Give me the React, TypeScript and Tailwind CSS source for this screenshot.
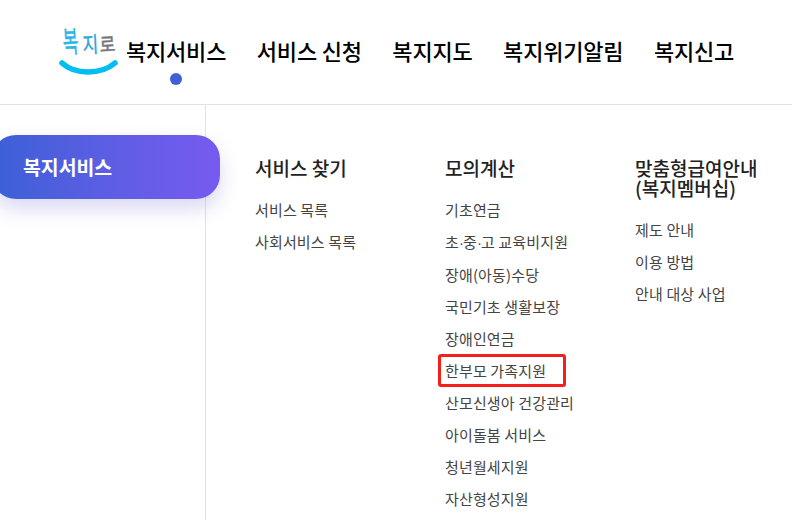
const nav = ["복지서비스", "서비스 신청", "복지지도", "복지위기알림", "복지신고"];
const cols = [
  { title: ["서비스 찾기"], items: ["서비스 목록", "사회서비스 목록"] },
  { title: ["모의계산"], items: ["기초연금", "초·중·고 교육비지원", "장애(아동)수당", "국민기초 생활보장", "장애인연금", "한부모 가족지원", "산모신생아 건강관리", "아이돌봄 서비스", "청년월세지원", "자산형성지원"] },
  { title: ["맞춤형급여안내", "(복지멤버십)"], items: ["제도 안내", "이용 방법", "안내 대상 사업"] },
];

function Item({ text }: { text: string }) {
  const parts = text.split("·");
  return (
    <>
      {parts.map((p, i) => (
        <span key={i}>
          {i > 0 && <span className="font-['Liberation_Sans',sans-serif] tracking-[-1px]">·</span>}
          {p}
        </span>
      ))}
    </>
  );
}

function Logo() {
  return (
    <svg width="60" height="54" viewBox="0 0 60 54" className="block overflow-visible">
      <text transform="translate(4.5 27) rotate(-4) scale(1 1.75)" fontSize="17" fill="#2bb4e8" stroke="#2bb4e8" strokeWidth="0.3" fontFamily="'Noto Sans CJK KR'">복</text>
      <text transform="translate(24 27) rotate(-3) scale(1 1.3)" fontSize="17" fill="#2ba5dc" stroke="#2ba5dc" strokeWidth="0.3" fontFamily="'Noto Sans CJK KR'">지</text>
      <text transform="translate(41 26) rotate(-3) scale(1 1.15)" fontSize="17" fill="#77787b" stroke="#77787b" strokeWidth="0.5" fontFamily="'Noto Sans CJK KR'">로</text>
      <path d="M3 37 C 16 49, 42 49, 56 37" fill="none" stroke="#00bdf2" strokeWidth="5.5" strokeLinecap="round" />
    </svg>
  );
}

export default function App() {
  return (
    <div className="w-[792px] h-[520px] overflow-hidden bg-white text-[#222] font-['Noto_Sans_CJK_KR',sans-serif]">
      <header className="h-[105px] border-b border-[#e2e2e2] flex items-start pl-[59px]">
        <div className="pt-[26px] w-[60px] shrink-0"><Logo /></div>
        <nav className="flex gap-[30.6px] pl-[7px] pt-[35px]">
          {nav.map((n, i) => (
            <div key={n} className="relative text-[22px] leading-[30px] font-medium text-black whitespace-nowrap tracking-[-0.2px]">
              {n}
              {i === 0 && <span className="absolute left-1/2 -translate-x-1/2 top-[38px] w-[12px] h-[12px] rounded-full bg-[#4060d8]" />}
            </div>
          ))}
        </nav>
      </header>
      <main className="flex h-[415px]">
        <aside className="w-[206px] shrink-0 border-r border-[#e2e2e2] relative">
          <div className="absolute left-[-8px] top-[30px] w-[228px] h-[64px] rounded-[24px] bg-gradient-to-r from-[#3a60d6] to-[#775af0] shadow-[0_10px_20px_rgba(80,80,200,0.22)] flex items-center pl-[31px] text-white text-[19.4px] font-bold">
            복지서비스
          </div>
        </aside>
        <div className="flex pl-[49px] pt-[50px]">
          {cols.map((c) => (
            <section key={c.title[0]} className="w-[190px] shrink-0">
              <h3 className="text-[19px] leading-[20px] font-medium text-[#222] mb-[16px] pt-[3px]">
                {c.title.map((t) => <div key={t}>{t}</div>)}
              </h3>
              <ul>
                {c.items.map((it) => (
                  <li key={it} className="relative text-[15px] leading-[32px] text-[#444] whitespace-nowrap tracking-[0.15px]">
                    <Item text={it} />
                    {it === "한부모 가족지원" && <span className="absolute left-[-7px] top-[-1px] w-[128px] h-[33px] rounded-[3px] border-[3px] border-[#f5201e]" />}
                  </li>
                ))}
              </ul>
            </section>
          ))}
        </div>
      </main>
    </div>
  );
}
